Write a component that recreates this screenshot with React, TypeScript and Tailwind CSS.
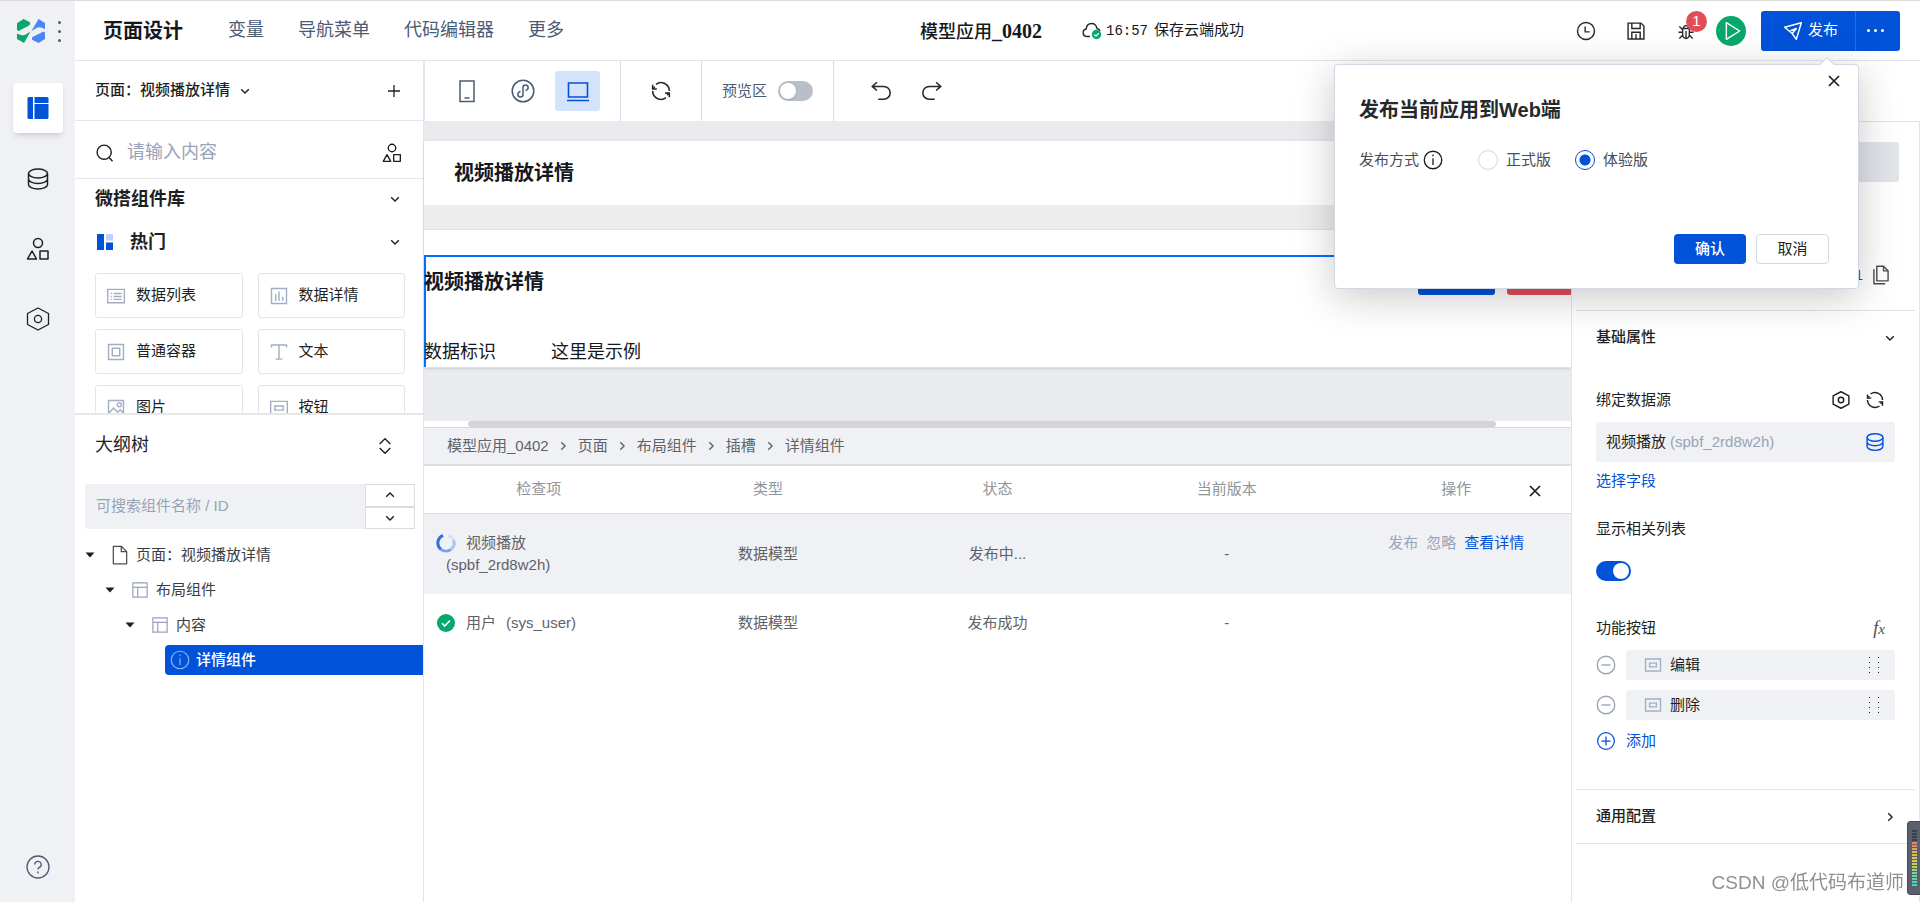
import { useState } from "react";
import type { ReactNode } from "react";
import clsx from "clsx";

interface IconProps {
  size?: number;
  className?: string;
  stroke?: number;
  children?: ReactNode;
}

// Base 24x24 line icon
function Icon({ size = 24, className, stroke = 1.5, children }: IconProps) {
  return (
    <svg
      width={size}
      height={size}
      viewBox="0 0 24 24"
      fill="none"
      stroke="currentColor"
      strokeWidth={stroke}
      className={clsx("shrink-0", className)}
      aria-hidden="true"
    >
      {children}
    </svg>
  );
}

const ChevronIcon = ({ className, size = 16 }: IconProps) => (
  <Icon size={size} stroke={2.4} className={className}>
    <path d="M5.5 9l6.5 6.5L18.500 9" />
  </Icon>
);

const CloseIcon = ({ className }: IconProps) => (
  <Icon size={16} stroke={2.6} className={className}>
    <path d="M4.500 4.500l15 15M19.500 4.500l-15 15" />
  </Icon>
);

const DatabaseIcon = ({ size = 24, className, stroke }: IconProps) => (
  <Icon size={size} stroke={stroke} className={className}>
    <ellipse cx="12" cy="6.500" rx="9.500" ry="4.500" />
    <path d="M2.500 6.500v11c0 2.500 4.200 4.500 9.500 4.500s9.500-2 9.500-4.500v-11M2.500 12c0 2.500 4.200 4.500 9.500 4.500s9.500-2 9.500-4.500" />
  </Icon>
);

const ShapesIcon = ({ size = 24, className, stroke }: IconProps) => (
  <Icon size={size} stroke={stroke} className={className}>
    <circle cx="12" cy="6" r="4.500" />
    <path d="M6 14l4.500 8h-9z M14 14h8v8h-8z" strokeLinejoin="round" />
  </Icon>
);

const HexagonIcon = ({ size = 26, className, stroke = 1.3 }: IconProps) => (
  <Icon size={size} stroke={stroke} className={className}>
    <path d="M12 1l10.500 5.500v11L12 23 1.500 17.500v-11z" strokeLinejoin="round" />
    <circle cx="12" cy="12" r="3.600" />
  </Icon>
);

const RefreshIcon = ({ size = 20, className }: IconProps) => (
  <Icon size={size} stroke={1.900} className={className}>
    <path d="M6 4a10 10 0 0 1 16 8M18 20A10 10 0 0 1 2 12" />
    <path d="M2 4.500v5h5M22 19.500v-5h-5" />
    <path d="M2.500 9.500l2-2.500M21.500 14.500l-2 2.500" />
  </Icon>
);

const ButtonBoxIcon = ({ size = 20 }: IconProps) => (
  <Icon size={size} stroke={1.800} className="text-[#a3aec2]">
    <path d="M2 4h20v16H2z M7.500 9.500h9v5h-9z" />
  </Icon>
);

const LayoutIcon = () => (
  <Icon size={18} stroke={1.600} className="text-[#97a3b7]">
    <path d="M2.500 2.500h19v19h-19z M2.500 8.500h19 M9 8.500v13" />
  </Icon>
);

const UndoIcon = ({ className }: IconProps) => (
  <Icon size={22} stroke={1.700} className={className}>
    <path d="M7.500 2.500L2.500 7l5 4.500M3 7h12a7 7 0 0 1 0 14H9" />
  </Icon>
);

const InfoIcon = ({ size = 20, className, stroke = 1.6 }: IconProps) => (
  <Icon size={size} stroke={stroke} className={className}>
    <circle cx="12" cy="12" r="10.500" />
    <path d="M12 10v8M12 5.500v2" />
  </Icon>
);

const components = [
  {
    name: "数据列表",
    icon: <path d="M2 4h20v16H2z M9 9h10 M9 12.500h10 M9 16h10 M5.500 9h1.500 M5.500 12.500h1.500 M5.500 16h1.500" />,
  },
  { name: "数据详情", icon: <path d="M3 3h18v18H3z M8 10v8 M12 6.500v11.500 M16.500 13v5" /> },
  { name: "普通容器", icon: <path d="M3 3h18v18H3z M7.500 7.500h9v9h-9z" /> },
  { name: "文本", icon: <path d="M3 6.500V3.500h18v3 M12 3.500v17 M8 20.500h8" /> },
  {
    name: "图片",
    icon: (
      <>
        <path d="M3 3h18v18H3z M3 19l6-7 5 5 3-3 4 4" />
        <circle cx="16" cy="8" r="2.500" />
      </>
    ),
  },
  { name: "按钮", icon: <path d="M2 4h20v16H2z M7 9.500h10v5H7z" /> },
];

const crumbs = ["模型应用_0402", "页面", "布局组件", "插槽", "详情组件"];

function Sidebar() {
  return (
    <aside className="flex w-[75px] shrink-0 flex-col items-center bg-[#f0f1f5] text-[#1d1f24]">
      <div className="flex h-[60px] w-full items-center gap-[13px] pl-[17px]">
        <svg width="28" height="24" viewBox="0 0 28 24" aria-hidden="true">
          <path d="M6.500 0L13 3.300v2.200C10 8 6 9.500 1.800 12L0 11V4.300z" fill="#07a86b" />
          <path d="M0 14.500c2.500 1.200 4.500 2 6.500 1.800 2.500-.3 5-3 7-3.800L7 24l-7-4z" fill="#07a86b" />
          <path d="M21.500 0L28 4v6.300c-2.500-1.300-5-2.300-7-1.800-2.500.5-4.500 3-6.500 3.500z" fill="#4a86f5" />
          <path d="M28 13.500v6.500L21.500 24 15 20.700v-2.200c3-2 7-3.500 11.200-6z" fill="#4a86f5" />
        </svg>
        <button type="button" aria-label="菜单" className="flex flex-col gap-1.5 text-[#4b5b76]">
          <span className="size-[3px] rounded-full bg-current" />
          <span className="size-[3px] rounded-full bg-current" />
          <span className="size-[3px] rounded-full bg-current" />
        </button>
      </div>
      <button
        type="button"
        aria-label="页面设计"
        className="mt-[22px] flex size-[50px] items-center justify-center rounded bg-white shadow-md"
      >
        <svg width="22" height="22" viewBox="0 0 22 22" fill="#0052d9" aria-hidden="true">
          <path d="M2 0h4v22H2a1.500 1.500 0 0 1-1.500-1.500v-19A1.500 1.500 0 0 1 2 0zM7.500 0H20a1.500 1.500 0 0 1 1.500 1.500V6h-14zM7.500 7h14v13.500A1.500 1.500 0 0 1 20 22H7.500z" />
        </svg>
      </button>
      <nav className="mt-[34px] flex flex-col items-center gap-[46px]">
        <button type="button" aria-label="数据源">
          <DatabaseIcon />
        </button>
        <button type="button" aria-label="组件">
          <ShapesIcon />
        </button>
        <button type="button" aria-label="设置">
          <HexagonIcon size={24} />
        </button>
      </nav>
      <button type="button" aria-label="帮助" className="mt-auto mb-[23px] text-[#4b5b76]">
        <Icon stroke={1.3}>
          <circle cx="12" cy="12" r="11" />
          <path d="M8.800 9.500a3.200 3.200 0 1 1 4.600 2.900c-1 .5-1.400 1-1.400 2.100M12 16.500v2" />
        </Icon>
      </button>
    </aside>
  );
}

function PublishDialog({ onClose }: { onClose: () => void }) {
  const [mode, setMode] = useState("trial");

  const modes = [
    { value: "release", label: "正式版" },
    { value: "trial", label: "体验版" },
  ];

  return (
    <div
      role="dialog"
      aria-label="发布当前应用到Web端"
      className="absolute top-[63px] right-[61px] z-20 h-[225px] w-[525px] rounded-sm border border-[#d3d7e3] bg-white px-6 text-[15px] text-[#4a4d52] shadow-[0_8px_40px_rgba(0,0,0,0.22)]"
    >
      <span className="absolute -top-[6px] right-[26px] size-2.5 rotate-45 border-t border-l border-[#d3d7e3] bg-white" />
      <button type="button" aria-label="关闭" onClick={onClose} className="absolute top-2 right-4 text-[#1d1f24]">
        <CloseIcon />
      </button>
      <h2 className="mt-[29px] text-[20px] leading-8 font-bold text-[#26282c]">发布当前应用到Web端</h2>
      <div className="mt-[22px] flex h-6 items-center">
        <span>发布方式</span>
        <InfoIcon size={20} className="ml-1 text-[#1d1f24]" />
        <div className="ml-[35px] flex gap-6">
          {modes.map((item) => (
            <label key={item.value} className="flex items-center gap-2">
              <input
                type="radio"
                name="publish-mode"
                checked={mode === item.value}
                onChange={() => setMode(item.value)}
                className="size-5 appearance-none rounded-full border border-[#d3d7e3] bg-white checked:border-[#0052d9] checked:bg-[radial-gradient(circle,#0052d9_5px,white_6px)]"
              />
              {item.label}
            </label>
          ))}
        </div>
      </div>
      <div className="mt-[62px] flex justify-end gap-2.5 pr-[5px]">
        <button type="button" className="h-[30px] w-[72px] rounded-sm bg-[#0052d9] font-medium text-white">
          确认
        </button>
        <button
          type="button"
          onClick={onClose}
          className="h-[30px] w-[73px] rounded-sm border border-[#d3d7e3] bg-white text-[#1d1f24]"
        >
          取消
        </button>
      </div>
    </div>
  );
}

function Header() {
  const [publishing, setPublishing] = useState(true);

  return (
    <header className="relative flex h-[60px] shrink-0 items-center border-b border-[#e3e5ec] bg-white">
      <h1 className="ml-7 text-[20px] font-bold text-[#16181d]">页面设计</h1>
      <nav className="ml-[45px] flex gap-[34px] text-[18px] text-[#4b5b76]">
        <a href="#variables">变量</a>
        <a href="#navigation">导航菜单</a>
        <a href="#code">代码编辑器</a>
        <a href="#more">更多</a>
      </nav>
      <div className="absolute inset-y-0 left-[845px] flex items-center whitespace-nowrap text-[#16181d]">
        <p className="font-['Liberation_Serif','Noto_Sans_CJK_SC',serif] text-[18px] font-medium">
          模型应用<span className="text-[20px] font-bold">_0402</span>
        </p>
        <svg width="20" height="18" viewBox="0 0 20 18" className="ml-10" aria-hidden="true">
          <path
            d="M8 14.500H4.500a3.800 3.800 0 0 1-.3-7.500C4.500 4 6.500 1.500 9.500 1.500S14.500 4 15 6.500c1.500.3 2.500 1 3 2.200"
            fill="none"
            stroke="#26282c"
            strokeWidth="1.400"
          />
          <circle cx="14.500" cy="12.500" r="4.700" fill="#07a86b" />
          <path d="M12.300 12.500l1.700 1.600 2.700-2.900" fill="none" stroke="#fff" strokeWidth="1.300" />
        </svg>
        <p className="ml-1 pt-1 font-['Liberation_Mono','Noto_Sans_CJK_SC',monospace] text-[15px]">
          <span className="mr-1.5 text-[14px]">16:57</span>保存云端成功
        </p>
      </div>
      <div className="ml-auto flex items-center pr-5 text-[#26282c]">
        <button type="button" aria-label="历史">
          <Icon size={20} stroke={1.700}>
            <circle cx="12" cy="12" r="10.200" />
            <path d="M11 6.500v6.500h5.500" />
          </Icon>
        </button>
        <button type="button" aria-label="保存" className="ml-[30px]">
          <Icon size={20} stroke={1.700}>
            <path d="M2.500 2.500h15.500l3.500 3.500v15.500h-19z M7 2.500v6.500h10V2.500 M7 21.500v-8h10v8 M12 16v5.500" />
          </Icon>
        </button>
        <button type="button" aria-label="调试" className="relative ml-[30px]">
          <Icon size={20} stroke={1.600}>
            <path d="M8 9h8v7a4 5 0 0 1-8 0z M9 9a3 3.500 0 0 1 6 0 M12 12v8.500 M4 6.500l4 4 M20 6.500l-4 4 M3 13.500h5 M16 13.500h5 M4 21l4-4 M20 21l-4-4" />
          </Icon>
          <span className="absolute -top-2.5 left-2.5 flex size-[21px] items-center justify-center rounded-full bg-[#e34d59] text-[15px] text-white">
            1
          </span>
        </button>
        <button
          type="button"
          aria-label="预览"
          className="ml-5 flex size-[30px] items-center justify-center rounded-full bg-[#07a86b] text-white"
        >
          <Icon size={20} stroke={1.700} className="ml-1">
            <path d="M4 2l16 10L4 22z" strokeLinejoin="round" />
          </Icon>
        </button>
        <div className="ml-[15px] flex h-10 overflow-hidden rounded-[3px] bg-[#0052d9] text-[15px] text-white">
          <button type="button" onClick={() => setPublishing(true)} className="flex w-[95px] items-center justify-center gap-[5px] border-r border-[#2b6de0] pl-[5px]">
            <Icon size={20} stroke={1.800}>
              <path d="M2 7.500L22 2l-6 20-5-7z M11 15l5-6-7 2.500" strokeLinejoin="round" />
            </Icon>
            发布
          </button>
          <button type="button" aria-label="更多操作" className="flex w-11 items-center justify-center gap-1 pr-1.5">
            <span className="size-[3px] rounded-full bg-white" />
            <span className="size-[3px] rounded-full bg-white" />
            <span className="size-[3px] rounded-full bg-white" />
          </button>
        </div>
      </div>
      {publishing && <PublishDialog onClose={() => setPublishing(false)} />}
    </header>
  );
}

function TreeCaret() {
  return (
    <svg width="10" height="6" viewBox="0 0 10 6" className="shrink-0" aria-hidden="true">
      <path d="M0.500 0.500h9L5 5.500z" fill="#1d1f24" />
    </svg>
  );
}

function LeftPanel() {
  return (
    <div className="flex w-[349px] shrink-0 flex-col border-r border-[#e3e5ec] bg-white text-[15px] text-[#1d1f24]">
      <div className="flex h-[60px] shrink-0 items-center border-b border-[#e3e5ec] pr-[21px] pl-5">
        <button type="button" className="flex items-center gap-2 font-medium">
          页面：视频播放详情
          <ChevronIcon size={14} />
        </button>
        <button type="button" aria-label="新建页面" className="ml-auto">
          <Icon size={16} stroke={1.900}>
            <path d="M12 3v18M3 12h18" />
          </Icon>
        </button>
      </div>
      <div className="flex h-[58px] shrink-0 items-center border-b border-[#e3e5ec] pt-1.5 pr-[21px] pl-5">
        <Icon size={20} stroke={1.700}>
          <circle cx="11" cy="11" r="8.500" />
          <path d="M17 17.500l4 4.500" />
        </Icon>
        <input
          aria-label="搜索组件"
          placeholder="请输入内容"
          className="ml-3 min-w-0 flex-1 text-[18px] outline-none placeholder:text-[#97a3b7]"
        />
        <button type="button" aria-label="组件分类">
          <ShapesIcon size={20} stroke={1.600} />
        </button>
      </div>
      <div className="h-[234px] shrink-0 overflow-hidden">
        <button type="button" className="flex h-10 w-full items-center justify-between pr-[21px] pl-5 text-[18px] font-bold">
          微搭组件库
          <ChevronIcon size={14} />
        </button>
        <button type="button" className="mt-[3px] flex h-10 w-full items-center pr-[21px] pl-5 text-[18px] font-bold">
          <svg width="20" height="20" viewBox="0 0 20 20" className="mr-[15px]" aria-hidden="true">
            <path d="M2 2h7v16H2z M11 10.500h7V18h-7z" fill="#0052d9" />
            <path d="M11 2h7v6.500h-7z" fill="#bbd3fb" />
          </svg>
          热门
          <ChevronIcon size={14} className="ml-auto" />
        </button>
        <div className="mt-[11px] grid grid-cols-2 gap-x-[15px] gap-y-[11px] pr-[18px] pl-5">
          {components.map((item) => (
            <button
              key={item.name}
              type="button"
              className="flex h-[45px] items-center gap-2.5 rounded-[3px] border border-[#e3e5ec] pl-2.5"
            >
              <Icon size={20} stroke={1.700} className="text-[#a3aec2]">
                {item.icon}
              </Icon>
              {item.name}
            </button>
          ))}
        </div>
      </div>
      <section className="min-h-0 flex-1 border-t-2 border-[#e7e7e7]">
        <div className="flex h-[61px] items-center justify-between pr-[30px] pl-5">
          <h2 className="text-[18px]">大纲树</h2>
          <button type="button" aria-label="展开全部">
            <Icon size={16} stroke={2}>
              <path d="M4 9l8-8 8 8M4 15l8 8 8-8" />
            </Icon>
          </button>
        </div>
        <div className="mt-2 mr-2 ml-2.5 flex h-[45px]">
          <input
            aria-label="搜索大纲"
            placeholder="可搜索组件名称 / ID"
            className="min-w-0 flex-1 rounded-l-[3px] bg-[#f0f1f5] px-[11px] outline-none placeholder:text-[#97a3b7]"
          />
          <div className="flex w-[50px] flex-col">
            <button type="button" aria-label="上一个" className="flex flex-1 items-center justify-center border border-[#dcdcdc]">
              <ChevronIcon size={14} className="rotate-180" />
            </button>
            <button type="button" aria-label="下一个" className="flex flex-1 items-center justify-center border border-[#dcdcdc]">
              <ChevronIcon size={14} />
            </button>
          </div>
        </div>
        <ul className="mt-2 leading-[35px] text-[#3a3d42]">
          <li className="flex h-[35px] items-center pl-2.5">
            <TreeCaret />
            <Icon size={20} stroke={1.500} className="mr-1.5 ml-[15px] text-[#4a4d52]">
              <path d="M4 1.500h9.500L20 8v14.500H4z M13.500 1.500V8H20" strokeLinejoin="round" />
            </Icon>
            页面：视频播放详情
          </li>
          <li className="flex h-[35px] items-center pl-[30px]">
            <TreeCaret />
            <span className="mr-[7px] ml-4">
              <LayoutIcon />
            </span>
            布局组件
          </li>
          <li className="flex h-[35px] items-center pl-[50px]">
            <TreeCaret />
            <span className="mr-[7px] ml-4">
              <LayoutIcon />
            </span>
            内容
          </li>
          <li className="flex h-[35px] items-center pl-[90px]">
            <button type="button" className="flex h-[30px] w-full items-center gap-1.5 rounded-l-sm bg-[#0052d9] pl-[5px] font-medium text-white">
              <InfoIcon size={20} stroke={1.400} className="text-[#8fb2f0]" />
              详情组件
            </button>
          </li>
        </ul>
      </section>
    </div>
  );
}

function Toolbar() {
  return (
    <div className="flex h-[60px] shrink-0 items-stretch border-l border-[#e3e5ec] bg-white text-[#26282c]">
      <div className="flex items-center border-r border-[#d9dce6] pr-5 pl-[30px] text-[#4b5b76]">
        <button type="button" aria-label="手机">
          <Icon size={24} stroke={1.500}>
            <path d="M5 2h14v20.500H5z M9.500 19h5" />
          </Icon>
        </button>
        <button type="button" aria-label="小程序" className="ml-8">
          <Icon size={24} stroke={1.500}>
            <circle cx="12" cy="12" r="10.800" />
            <path d="M14.500 11.500c4 -1 3-5.500 0-5.500-1.500 0-2.500 1-2.500 2.500v7c0 1.500-1 2.500-2.500 2.500-3 0-4-4.500 0-5.500" />
          </Icon>
        </button>
        <button type="button" aria-label="桌面" className="ml-5 flex h-10 w-[45px] items-center justify-center rounded-[3px] bg-[#d4e3fc] text-[#0052d9]">
          <Icon size={24} stroke={1.600}>
            <path d="M2.500 4h19v14h-19z M1 21.500h22" />
          </Icon>
        </button>
      </div>
      <div className="flex items-center border-r border-[#d9dce6] px-[30px]">
        <button type="button" aria-label="刷新">
          <RefreshIcon />
        </button>
      </div>
      <label className="flex items-center gap-[11px] border-r border-[#d9dce6] px-5 text-[15px] text-[#4b5b76]">
        预览区
        <input
          type="checkbox"
          role="switch"
          className="h-5 w-[35px] appearance-none rounded-full bg-[#b9bfca] p-0.5 before:block before:size-4 before:rounded-full before:bg-white before:shadow checked:bg-[#0052d9]"
        />
      </label>
      <div className="flex items-center gap-[29px] pl-[36px]">
        <button type="button" aria-label="撤销">
          <UndoIcon />
        </button>
        <button type="button" aria-label="重做">
          <UndoIcon className="-scale-x-100" />
        </button>
      </div>
    </div>
  );
}

function Canvas() {
  return (
    <div className="flex h-[306px] shrink-0 flex-col bg-[#eaebef] pt-[19px] text-[#16181d]">
      <div className="border-y border-[#e2e3e6] bg-white shadow-sm">
        <div className="flex h-16 items-center pl-[30px] text-[20px] font-bold">视频播放详情</div>
        <div className="h-[25px] border-b border-[#e2e2e2] bg-[#ededed]" />
        <div className="pt-[25px]">
          <div className="h-28 pt-2 shadow-[inset_2px_2px_0_#006eff]">
            <div className="flex h-[38px] items-center gap-3">
              <h2 className="flex-1 text-[20px] font-bold">视频播放详情</h2>
              <button type="button" aria-label="编辑" className="h-8 w-[77px] self-start rounded-[3px] bg-[#0052d9]" />
              <button type="button" aria-label="删除" className="h-8 w-16 self-start rounded-l-[3px] bg-[#e34d59]" />
            </div>
            <div className="mt-[37px] flex text-[18px] leading-7">
              <span className="w-[127px]">数据标识</span>
              <span>这里是示例</span>
            </div>
          </div>
        </div>
      </div>
      <div className="mt-auto h-1.5 bg-white pr-[75px] pl-11">
        <div className="h-1.5 rounded-full bg-[#d4d4d4]" />
      </div>
    </div>
  );
}

function CheckPanel() {
  return (
    <div className="relative min-h-0 flex-1 border-t-2 border-[#dddee2] bg-white text-[15px] text-[#5f6268]">
      <table className="w-full table-fixed border-collapse text-center">
        <thead>
          <tr className="h-[47px] border-b border-[#dcdde1] text-[#919498]">
            <th className="font-normal">检查项</th>
            <th className="font-normal">类型</th>
            <th className="font-normal">状态</th>
            <th className="font-normal">当前版本</th>
            <th className="font-normal">操作</th>
          </tr>
        </thead>
        <tbody>
          <tr className="h-[81px] bg-[#f0f1f5]">
            <td className="pl-3 text-left leading-[22px]">
              <div className="flex items-center gap-[10px]">
                <svg width="20" height="20" viewBox="0 0 20 20" fill="none" strokeWidth="3" aria-hidden="true">
                  <path d="M7 2.500A8 8 0 0 0 5 16.300" stroke="#2f6fe3" />
                  <path d="M5 16.300A8 8 0 0 0 15 16.300" stroke="#76a0ee" />
                  <path d="M15 16.300A8 8 0 0 0 17.500 7" stroke="#a9c4f5" />
                  <path d="M17.500 7A8 8 0 0 0 12 2.500" stroke="#d6e3fb" />
                </svg>
                视频播放
              </div>
              <div className="pl-2.5">(spbf_2rd8w2h)</div>
            </td>
            <td>数据模型</td>
            <td>发布中...</td>
            <td>-</td>
            <td className="pt-[18px] align-top leading-[22px] whitespace-nowrap">
              <span className="inline-flex gap-2">
                <button type="button" disabled className="text-[#97a3b7]">
                  发布
                </button>
                <button type="button" disabled className="text-[#97a3b7]">
                  忽略
                </button>
                <a href="#detail" className="text-[#0052d9]">
                  查看详情
                </a>
              </span>
            </td>
          </tr>
          <tr className="h-[58px]">
            <td className="pl-3 text-left">
              <div className="flex items-center gap-[10px]">
                <svg width="20" height="20" viewBox="0 0 20 20" aria-hidden="true">
                  <circle cx="10" cy="10" r="9" fill="#07a86b" />
                  <path d="M6 10.300l2.700 2.700L14 7.500" fill="none" stroke="#fff" strokeWidth="1.600" />
                </svg>
                <span>
                  用户<span className="ml-2.5">(sys_user)</span>
                </span>
              </div>
            </td>
            <td>数据模型</td>
            <td>发布成功</td>
            <td>-</td>
            <td />
          </tr>
        </tbody>
      </table>
      <button type="button" aria-label="关闭" className="absolute top-[17px] right-7 text-[#1d1f24]">
        <CloseIcon />
      </button>
    </div>
  );
}

function PropertyPanel() {
  return (
    <div className="flex w-[349px] shrink-0 flex-col border-x border-t border-[#e3e5ec] bg-white pr-1 pl-1 text-[15px] text-[#1d1f24]">
      <div className="flex h-[189px] shrink-0 flex-col items-end border-b border-[#dfe2ec] pt-5 pr-4">
        <div className="h-10 w-full rounded-[3px] bg-[#e1e4e9]" />
        <div className="mt-[82px] mr-2 flex items-center gap-2 text-[#4a4d52]">
          1
          <button type="button" aria-label="复制">
            <Icon size={20} stroke={1.700}>
              <path d="M7 1.500h8l5.500 5.500v12H7z M15 1.500V7h5.500 M3.500 5v17.500H17" strokeLinejoin="round" />
            </Icon>
          </button>
        </div>
      </div>
      <div className="flex flex-col pr-5 pl-5">
        <button type="button" className="-mr-2 flex h-[53px] items-center justify-between pr-1.5 font-medium">
          基础属性
          <ChevronIcon size={14} />
        </button>
        <div className="mt-6 flex h-6 items-center">
          <span>绑定数据源</span>
          <button type="button" aria-label="数据源设置" className="ml-auto">
            <HexagonIcon size={18} stroke={1.900} />
          </button>
          <button type="button" aria-label="刷新数据源" className="mr-[11px] ml-4">
            <RefreshIcon size={18} />
          </button>
        </div>
        <button type="button" className="mt-2.5 flex h-10 items-center rounded-[3px] bg-[#f0f1f5] px-2.5">
          视频播放<span className="ml-1 text-[#97a3b7]">(spbf_2rd8w2h)</span>
          <DatabaseIcon size={20} stroke={1.700} className="ml-auto text-[#0052d9]" />
        </button>
        <a href="#fields" className="mt-2 self-start leading-[22px] text-[#0052d9]">
          选择字段
        </a>
        <label htmlFor="related" className="mt-[26px] leading-[22px]">
          显示相关列表
        </label>
        <input
          id="related"
          type="checkbox"
          role="switch"
          defaultChecked
          className="mt-[21px] h-5 w-[35px] appearance-none rounded-full bg-[#b9bfca] p-0.5 before:block before:size-4 before:rounded-full before:bg-white checked:bg-[#0052d9] checked:before:ml-auto"
        />
        <div className="mt-[35px] flex h-6 items-center justify-between pr-2.5">
          功能按钮
          <button type="button" aria-label="表达式" className="font-['Liberation_Serif',serif] text-[18px] text-[#4a4d52] italic">
            f<span className="text-[15px]">x</span>
          </button>
        </div>
        <ul className="mt-2.5 flex flex-col gap-2.5">
          {["编辑", "删除"].map((name) => (
            <li key={name} className="flex items-center gap-2.5">
              <button type="button" aria-label={`移除${name}`} className="text-[#97a3b7]">
                <Icon size={20} stroke={1.600}>
                  <circle cx="12" cy="12" r="10.500" />
                  <path d="M6.500 12h11" />
                </Icon>
              </button>
              <div className="flex h-[30px] flex-1 items-center gap-2 rounded-[3px] bg-[#f0f1f5] pr-[15px] pl-[18px]">
                <ButtonBoxIcon size={18} />
                {name}
                <svg width="11" height="18" viewBox="0 0 11 18" fill="#1d1f24" className="ml-auto" aria-hidden="true">
                  {[1, 6, 11, 16].map((y) => (
                    <g key={y}>
                      <rect x="0" y={y} width="1" height="1" />
                      <rect x="9" y={y} width="1" height="1" />
                    </g>
                  ))}
                </svg>
              </div>
            </li>
          ))}
        </ul>
        <button type="button" className="mt-2.5 flex items-center gap-2.5 self-start leading-[22px] text-[#0052d9]">
          <Icon size={20} stroke={1.500}>
            <circle cx="12" cy="12" r="10" />
            <path d="M6.500 12h11M12 6.500v11" />
          </Icon>
          添加
        </button>
      </div>
      <button
        type="button"
        className="mt-[37px] flex h-[55px] items-center justify-between border-y border-[#e3e5e8] pr-[18px] pl-5 font-medium"
      >
        通用配置
        <ChevronIcon size={14} className="-rotate-90" />
      </button>
    </div>
  );
}

function VolumeMeter() {
  const bars = [
    "#3b3f4a", "#3b3f4a", "#3b3f4a", "#3b3f4a", "#e8895a", "#e8895a", "#dfa454", "#dcb552", "#dcc14f", "#d6cb50",
    "#cbd153", "#bcd45c", "#a9d569", "#96d478", "#85d387", "#74d394", "#64d3a1", "#55d3ad", "#4bd3b6",
  ];
  return (
    <div className="fixed right-0 bottom-[7px] z-10 flex w-[13px] flex-col gap-px rounded-l border border-r-0 border-[#474b57] bg-[#5b6070] pt-2 pb-2 pl-1">
      {bars.map((color, i) => (
        <span key={i} className="h-0.5 w-[5px]" style={{ backgroundColor: color }} />
      ))}
    </div>
  );
}

export default function App() {
  return (
    <div className="flex h-screen overflow-hidden border-t border-[#dcdcdc] bg-white font-['Liberation_Sans','Noto_Sans_CJK_SC',sans-serif]">
      <Sidebar />
      <div className="flex min-w-0 flex-1 flex-col">
        <Header />
        <div className="flex min-h-0 flex-1">
          <LeftPanel />
          <div className="flex min-w-0 flex-1 flex-col">
            <Toolbar />
            <div className="flex min-h-0 flex-1">
              <main className="flex min-w-0 flex-1 flex-col">
                <Canvas />
                <nav
                  aria-label="组件路径"
                  className="flex h-[37px] shrink-0 items-center gap-[7px] border-t border-[#d5d8e2] bg-[#f0f1f5] pl-[23px] text-[15px] text-[#5f6268]"
                >
                  {crumbs.map((crumb, i) => (
                    <span key={crumb} className="flex items-center gap-2">
                      {i > 0 && <ChevronIcon size={14} className="-rotate-90" />}
                      {crumb}
                    </span>
                  ))}
                </nav>
                <CheckPanel />
              </main>
              <PropertyPanel />
            </div>
          </div>
        </div>
      </div>
      <VolumeMeter />
      <p className="fixed right-4 bottom-[3px] text-[19px] leading-8 text-[#8d9095]">CSDN @低代码布道师</p>
    </div>
  );
}
